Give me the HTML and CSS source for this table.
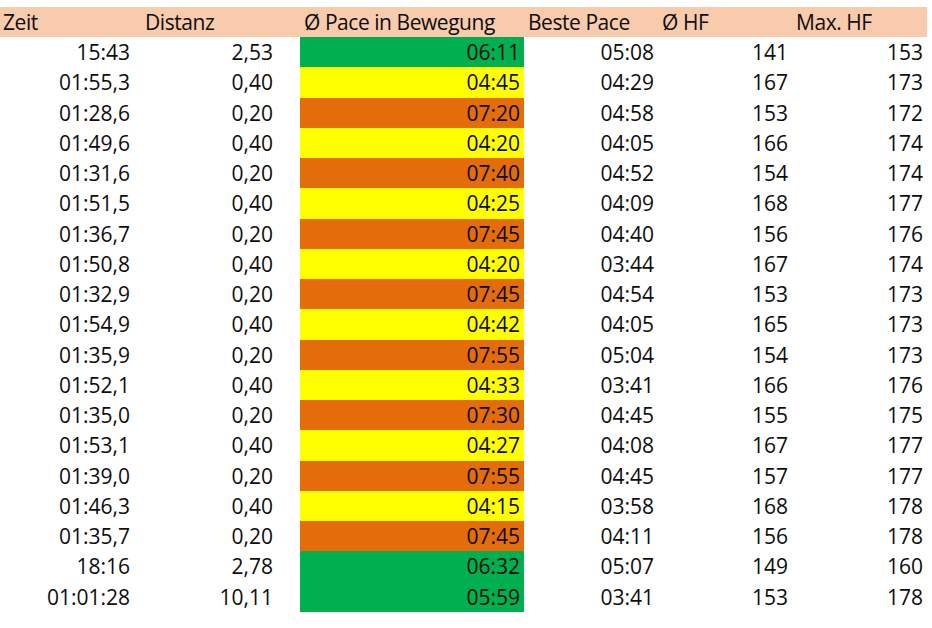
FILE: index.html
```html
<!DOCTYPE html>
<html lang="de">
<head>
<meta charset="utf-8">
<title>Laufintervalle</title>
<link rel="stylesheet" href="styles.css">
</head>
<body>
<div class="sheet">
  <div class="row head">
    <div class="c c1">Zeit</div>
    <div class="c c2">Distanz</div>
    <div class="c c3">Ø Pace in Bewegung</div>
    <div class="c c4">Beste Pace</div>
    <div class="c c5">Ø HF</div>
    <div class="c c6">Max. HF</div>
  </div>
  <div class="row"><div class="c c1">15:43</div><div class="c c2">2,53</div><div class="c c3 g">06:11</div><div class="c c4">05:08</div><div class="c c5">141</div><div class="c c6">153</div></div>
  <div class="row"><div class="c c1">01:55,3</div><div class="c c2">0,40</div><div class="c c3 y">04:45</div><div class="c c4">04:29</div><div class="c c5">167</div><div class="c c6">173</div></div>
  <div class="row"><div class="c c1">01:28,6</div><div class="c c2">0,20</div><div class="c c3 o">07:20</div><div class="c c4">04:58</div><div class="c c5">153</div><div class="c c6">172</div></div>
  <div class="row"><div class="c c1">01:49,6</div><div class="c c2">0,40</div><div class="c c3 y">04:20</div><div class="c c4">04:05</div><div class="c c5">166</div><div class="c c6">174</div></div>
  <div class="row"><div class="c c1">01:31,6</div><div class="c c2">0,20</div><div class="c c3 o">07:40</div><div class="c c4">04:52</div><div class="c c5">154</div><div class="c c6">174</div></div>
  <div class="row"><div class="c c1">01:51,5</div><div class="c c2">0,40</div><div class="c c3 y">04:25</div><div class="c c4">04:09</div><div class="c c5">168</div><div class="c c6">177</div></div>
  <div class="row"><div class="c c1">01:36,7</div><div class="c c2">0,20</div><div class="c c3 o">07:45</div><div class="c c4">04:40</div><div class="c c5">156</div><div class="c c6">176</div></div>
  <div class="row"><div class="c c1">01:50,8</div><div class="c c2">0,40</div><div class="c c3 y">04:20</div><div class="c c4">03:44</div><div class="c c5">167</div><div class="c c6">174</div></div>
  <div class="row"><div class="c c1">01:32,9</div><div class="c c2">0,20</div><div class="c c3 o">07:45</div><div class="c c4">04:54</div><div class="c c5">153</div><div class="c c6">173</div></div>
  <div class="row"><div class="c c1">01:54,9</div><div class="c c2">0,40</div><div class="c c3 y">04:42</div><div class="c c4">04:05</div><div class="c c5">165</div><div class="c c6">173</div></div>
  <div class="row"><div class="c c1">01:35,9</div><div class="c c2">0,20</div><div class="c c3 o">07:55</div><div class="c c4">05:04</div><div class="c c5">154</div><div class="c c6">173</div></div>
  <div class="row"><div class="c c1">01:52,1</div><div class="c c2">0,40</div><div class="c c3 y">04:33</div><div class="c c4">03:41</div><div class="c c5">166</div><div class="c c6">176</div></div>
  <div class="row"><div class="c c1">01:35,0</div><div class="c c2">0,20</div><div class="c c3 o">07:30</div><div class="c c4">04:45</div><div class="c c5">155</div><div class="c c6">175</div></div>
  <div class="row"><div class="c c1">01:53,1</div><div class="c c2">0,40</div><div class="c c3 y">04:27</div><div class="c c4">04:08</div><div class="c c5">167</div><div class="c c6">177</div></div>
  <div class="row"><div class="c c1">01:39,0</div><div class="c c2">0,20</div><div class="c c3 o">07:55</div><div class="c c4">04:45</div><div class="c c5">157</div><div class="c c6">177</div></div>
  <div class="row"><div class="c c1">01:46,3</div><div class="c c2">0,40</div><div class="c c3 y">04:15</div><div class="c c4">03:58</div><div class="c c5">168</div><div class="c c6">178</div></div>
  <div class="row"><div class="c c1">01:35,7</div><div class="c c2">0,20</div><div class="c c3 o">07:45</div><div class="c c4">04:11</div><div class="c c5">156</div><div class="c c6">178</div></div>
  <div class="row"><div class="c c1">18:16</div><div class="c c2">2,78</div><div class="c c3 g">06:32</div><div class="c c4">05:07</div><div class="c c5">149</div><div class="c c6">160</div></div>
  <div class="row"><div class="c c1">01:01:28</div><div class="c c2">10,11</div><div class="c c3 g">05:59</div><div class="c c4">03:41</div><div class="c c5">153</div><div class="c c6">178</div></div>
</div>
</body>
</html>
```
FILE: styles.css
```css
html, body {
  margin: 0;
  padding: 0;
  background: #ffffff;
}

body {
  font-family: "Open Sans", "Liberation Sans", sans-serif;
  font-size: 21px;
  color: #0d0d0d;
}

.sheet {
  width: 927px;
  padding-top: 7px;
}

.row {
  display: grid;
  grid-template-columns: 137px 163px 224px 135px 134px 134px;
  height: 30.25px;
  line-height: 30.25px;
}

.row.head {
  height: 30px;
  line-height: 30px;
  background: #f8cbad;
  letter-spacing: -0.45px;
}

.c {
  white-space: nowrap;
  text-align: right;
  overflow: hidden;
}

.c1 { padding-right: 7px; }
.c2 { padding-right: 27px; }
.c3 { padding-right: 4px; }
.c4 { padding-right: 5px; }
.c5 { padding-right: 5px; }
.c6 { padding-right: 4px; }

.head .c {
  text-align: left;
  padding-right: 0;
}

.head .c1 { padding-left: 3px; }
.head .c2 { padding-left: 8px; }
.head .c3 { padding-left: 4px; }
.head .c4 { padding-left: 4px; }
.head .c5 { padding-left: 3px; }
.head .c6 { padding-left: 3px; }

.g { background: #00b050; }
.y { background: #ffff00; }
.o { background: #e46c0a; }
```
